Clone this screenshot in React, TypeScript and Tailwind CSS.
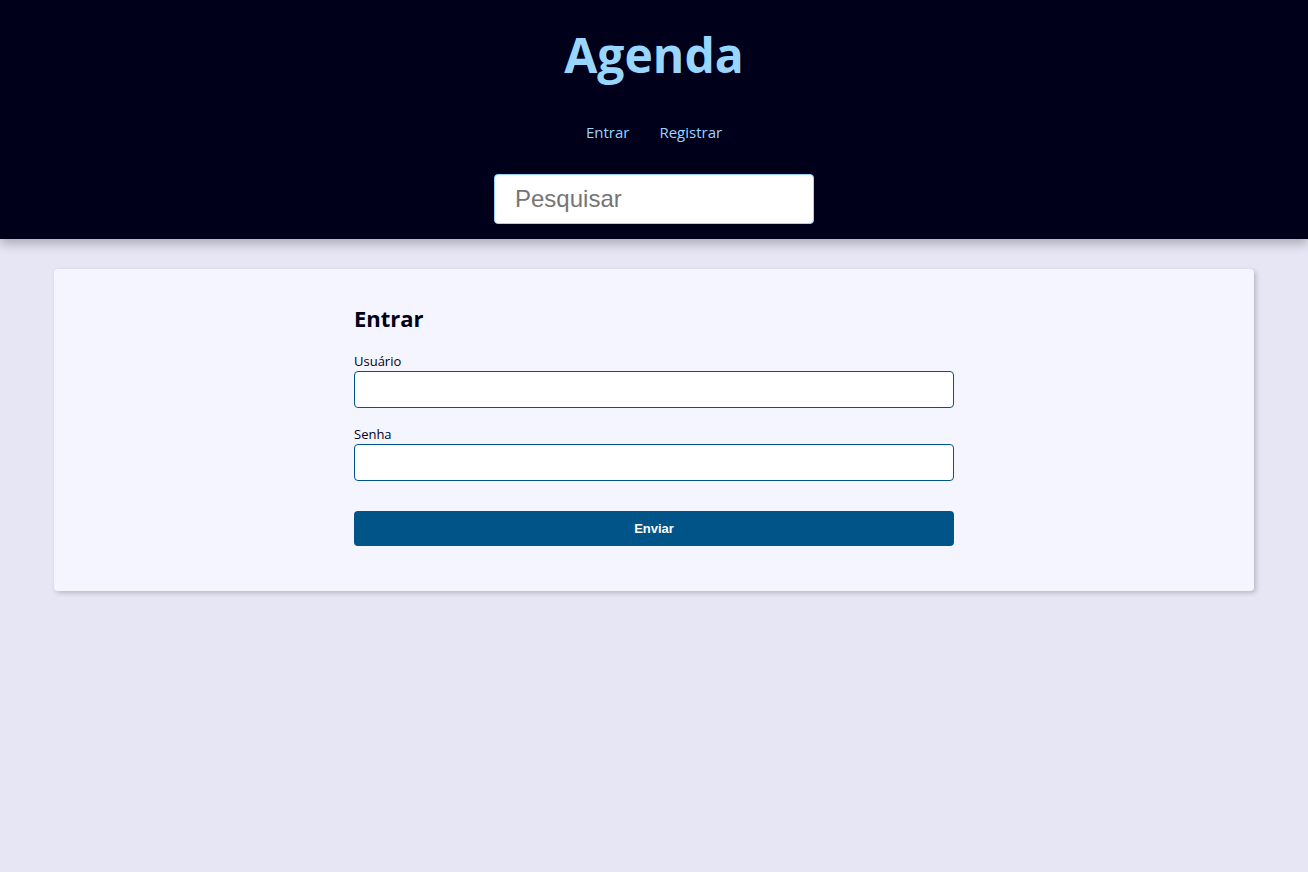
export default function App() {
  return (
    <div className="min-h-screen bg-[#e6e6f4] font-['Segoe_UI','Open_Sans',sans-serif] text-[#00001a]">
      <header className="flex flex-col items-center bg-[#00001a] pb-[15px] pt-5 text-[#99d6ff] shadow-[0_5px_10px_rgba(0,0,0,0.25)]">
        <h1 className="text-[48px] font-bold leading-[70px]">Agenda</h1>
        <nav className="mt-[26px] flex text-[15px] leading-6">
          <a href="#entrar" className="px-[15px] py-1">Entrar</a>
          <a href="#registrar" className="px-[15px] py-1">Registrar</a>
        </nav>
        <form role="search" className="mt-[26px] w-full max-w-[320px]">
          <input
            type="search"
            aria-label="Pesquisar"
            placeholder="Pesquisar"
            className="block h-[50px] w-full rounded border border-[#99d6ff] bg-white px-5 font-['Liberation_Sans',sans-serif] text-2xl text-black placeholder:text-[#757575]"
          />
        </form>
      </header>
      <main className="mx-auto mt-[30px] max-w-[1200px] rounded bg-[#f5f5ff] px-5 pb-[45px] pt-[30px] shadow-[2px_2px_5px_rgba(0,0,0,0.2)]">
        <form className="mx-auto flex max-w-[600px] flex-col text-[13px]">
          <h2 className="text-[22px] font-bold leading-[38px]">Entrar</h2>
          <label htmlFor="user" className="mt-[14px] leading-5">Usuário</label>
          <input id="user" type="text" className="h-[37px] rounded border border-[#005488] bg-white px-2.5" />
          <label htmlFor="password" className="mt-4 leading-5">Senha</label>
          <input id="password" type="password" className="h-[37px] rounded border border-[#005488] bg-white px-2.5" />
          <button type="submit" className="mt-[30px] h-[35px] rounded bg-[#005488] font-['Liberation_Sans',sans-serif] font-bold text-white">
            Enviar
          </button>
        </form>
      </main>
    </div>
  );
}
